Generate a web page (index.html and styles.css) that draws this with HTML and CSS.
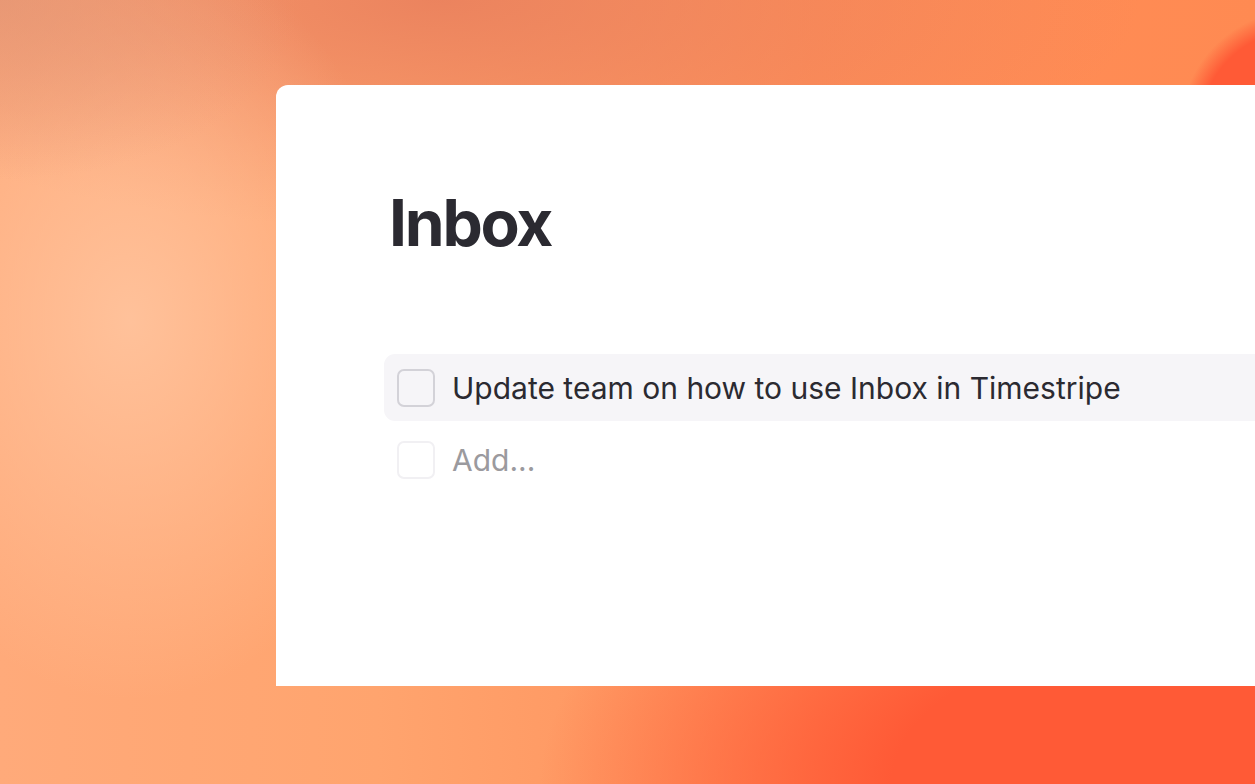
FILE: index.html
```html
<!DOCTYPE html>
<html>
<head>
<meta charset="utf-8">
<link rel="stylesheet" href="styles.css">
</head>
<body>
<div class="bg">
  <main class="card">
    <h1 class="title">Inbox</h1>
    <ul class="list">
      <li class="row row-active">
        <span class="box"></span>
        <span class="label">Update team on how to use Inbox in Timestripe</span>
      </li>
      <li class="row row-add">
        <span class="box box-faint"></span>
        <span class="label label-add">Add...</span>
      </li>
    </ul>
  </main>
</div>
</body>
</html>
```
FILE: styles.css
```css
html, body {
  margin: 0;
  padding: 0;
  width: 1255px;
  height: 784px;
  overflow: hidden;
}
.bg {
  width: 1255px;
  height: 784px;
  box-sizing: border-box;
  padding: 85px 0 98px 276px;
  background:
    radial-gradient(circle at 1300px 130px, #ff5a36 100px, rgba(255,90,54,0) 120px),
    radial-gradient(ellipse 300px 180px at 0px 0px, rgba(226,150,118,0.7), rgba(226,150,118,0) 100%),
    radial-gradient(ellipse 280px 380px at 130px 320px, rgba(255,196,158,0.9), rgba(255,196,158,0) 100%),
    radial-gradient(ellipse 700px 230px at 440px 0px, rgba(232,126,92,0.85), rgba(232,126,92,0) 100%),
    radial-gradient(ellipse 640px 330px at 1180px 784px, #ff5a36 45%, rgba(255,90,54,0) 100%),
    linear-gradient(90deg, #ffaa7a 0%, #ffa46e 30%, #ff8e58 65%, #ff8a52 100%);
  font-family: Inter, "Noto Sans", sans-serif;
}
.card {
  height: 601px;
  background: #ffffff;
  border-top-left-radius: 12px;
  padding: 100px 0 0 113px;
  box-sizing: border-box;
}
.title {
  margin: 0;
  font-size: 64px;
  line-height: 76px;
  font-weight: 700;
  color: #2b2a31;
  letter-spacing: -2.2px;
}
.list {
  list-style: none;
  margin: 93px 0 0 -5px;
  padding: 0;
}
.row {
  display: flex;
  align-items: center;
  gap: 17px;
  height: 67px;
  padding-left: 13px;
  border-radius: 11px;
}
.row-active {
  background: #f6f5f8;
  border-top-right-radius: 0;
  border-bottom-right-radius: 0;
}
.row-add {
  height: 78px;
}
.box {
  width: 38px;
  height: 38px;
  box-sizing: border-box;
  border: 2px solid #d3d2d8;
  border-radius: 7px;
  flex: none;
}
.box-faint {
  border-color: #f1f0f3;
}
.label {
  font-size: 30px;
  color: #2b2a31;
}
.label-add {
  color: #9b9a9e;
}
```
